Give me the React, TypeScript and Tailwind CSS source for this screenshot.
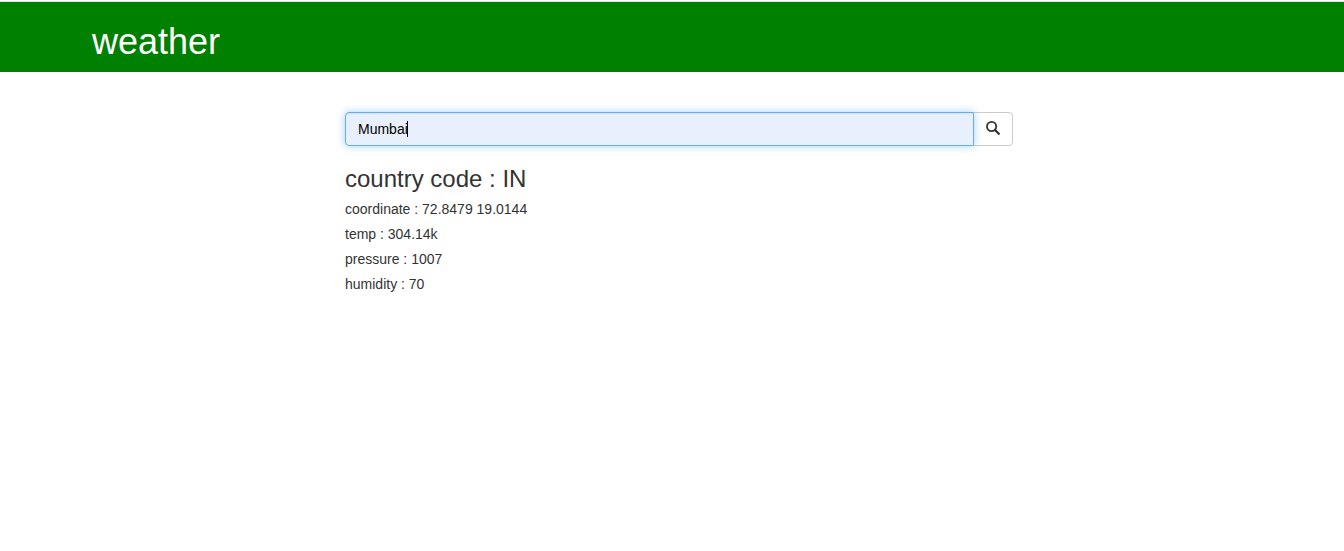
import { useState } from "react";

const readings = [
  { label: "coordinate", value: "72.8479 19.0144" },
  { label: "temp", value: "304.14k" },
  { label: "pressure", value: "1007" },
  { label: "humidity", value: "70" },
];

function SearchIcon() {
  return (
    <svg viewBox="0 0 14 14" className="size-3.5" fill="none" stroke="currentColor" aria-hidden="true">
      <circle cx="5.6" cy="5.5" r="4.6" strokeWidth="1.8" />
      <path d="M9.1 9l3.7 3.7" strokeWidth="2.3" strokeLinecap="round" />
    </svg>
  );
}

export default function App() {
  const [city, setCity] = useState("Mumbai");
  const [touched, setTouched] = useState(false);

  return (
    <div className="bg-white font-['Liberation_Sans',Arial,sans-serif] text-sm text-[#333333]">
      <header className="mt-px border-t border-[#dee1e6] bg-[#008000]">
        <div className="mx-auto max-w-[1160px] pt-5 pb-2.5">
          <h1 className="text-4xl leading-10 text-white">weather</h1>
        </div>
      </header>

      <main className="mx-auto max-w-[682px] pt-10 pl-3.5">
        <form className="flex" onSubmit={(e) => e.preventDefault()}>
          <div className="relative z-10 min-w-0 flex-1">
            <input
              type="text"
              aria-label="City"
              value={city}
              onChange={(e) => setCity(e.target.value)}
              onFocus={() => setTouched(true)}
              className="block h-[34px] w-full rounded-l border border-[#66afe9] bg-[#e8f0fe] px-3 text-sm text-black shadow-[inset_0_1px_1px_rgba(0,0,0,0.075),0_0_8px_rgba(102,175,233,0.6)] outline-none"
            />
            {!touched && (
              <span className="pointer-events-none absolute top-[9px] left-[62px] h-4 w-px bg-black" />
            )}
          </div>
          <button
            type="submit"
            aria-label="Search"
            className="-ml-px flex h-[34px] w-10 items-center justify-center rounded-r border border-[#cccccc] bg-white pb-0.5 text-[#333333]"
          >
            <SearchIcon />
          </button>
        </form>

        <section className="flex flex-col gap-2.5 pt-5">
          <h2 className="text-2xl leading-[26px]">country code : IN</h2>
          {readings.map((r) => (
            <p key={r.label} className="leading-[15px]">
              {r.label} : {r.value}
            </p>
          ))}
        </section>
      </main>
    </div>
  );
}
